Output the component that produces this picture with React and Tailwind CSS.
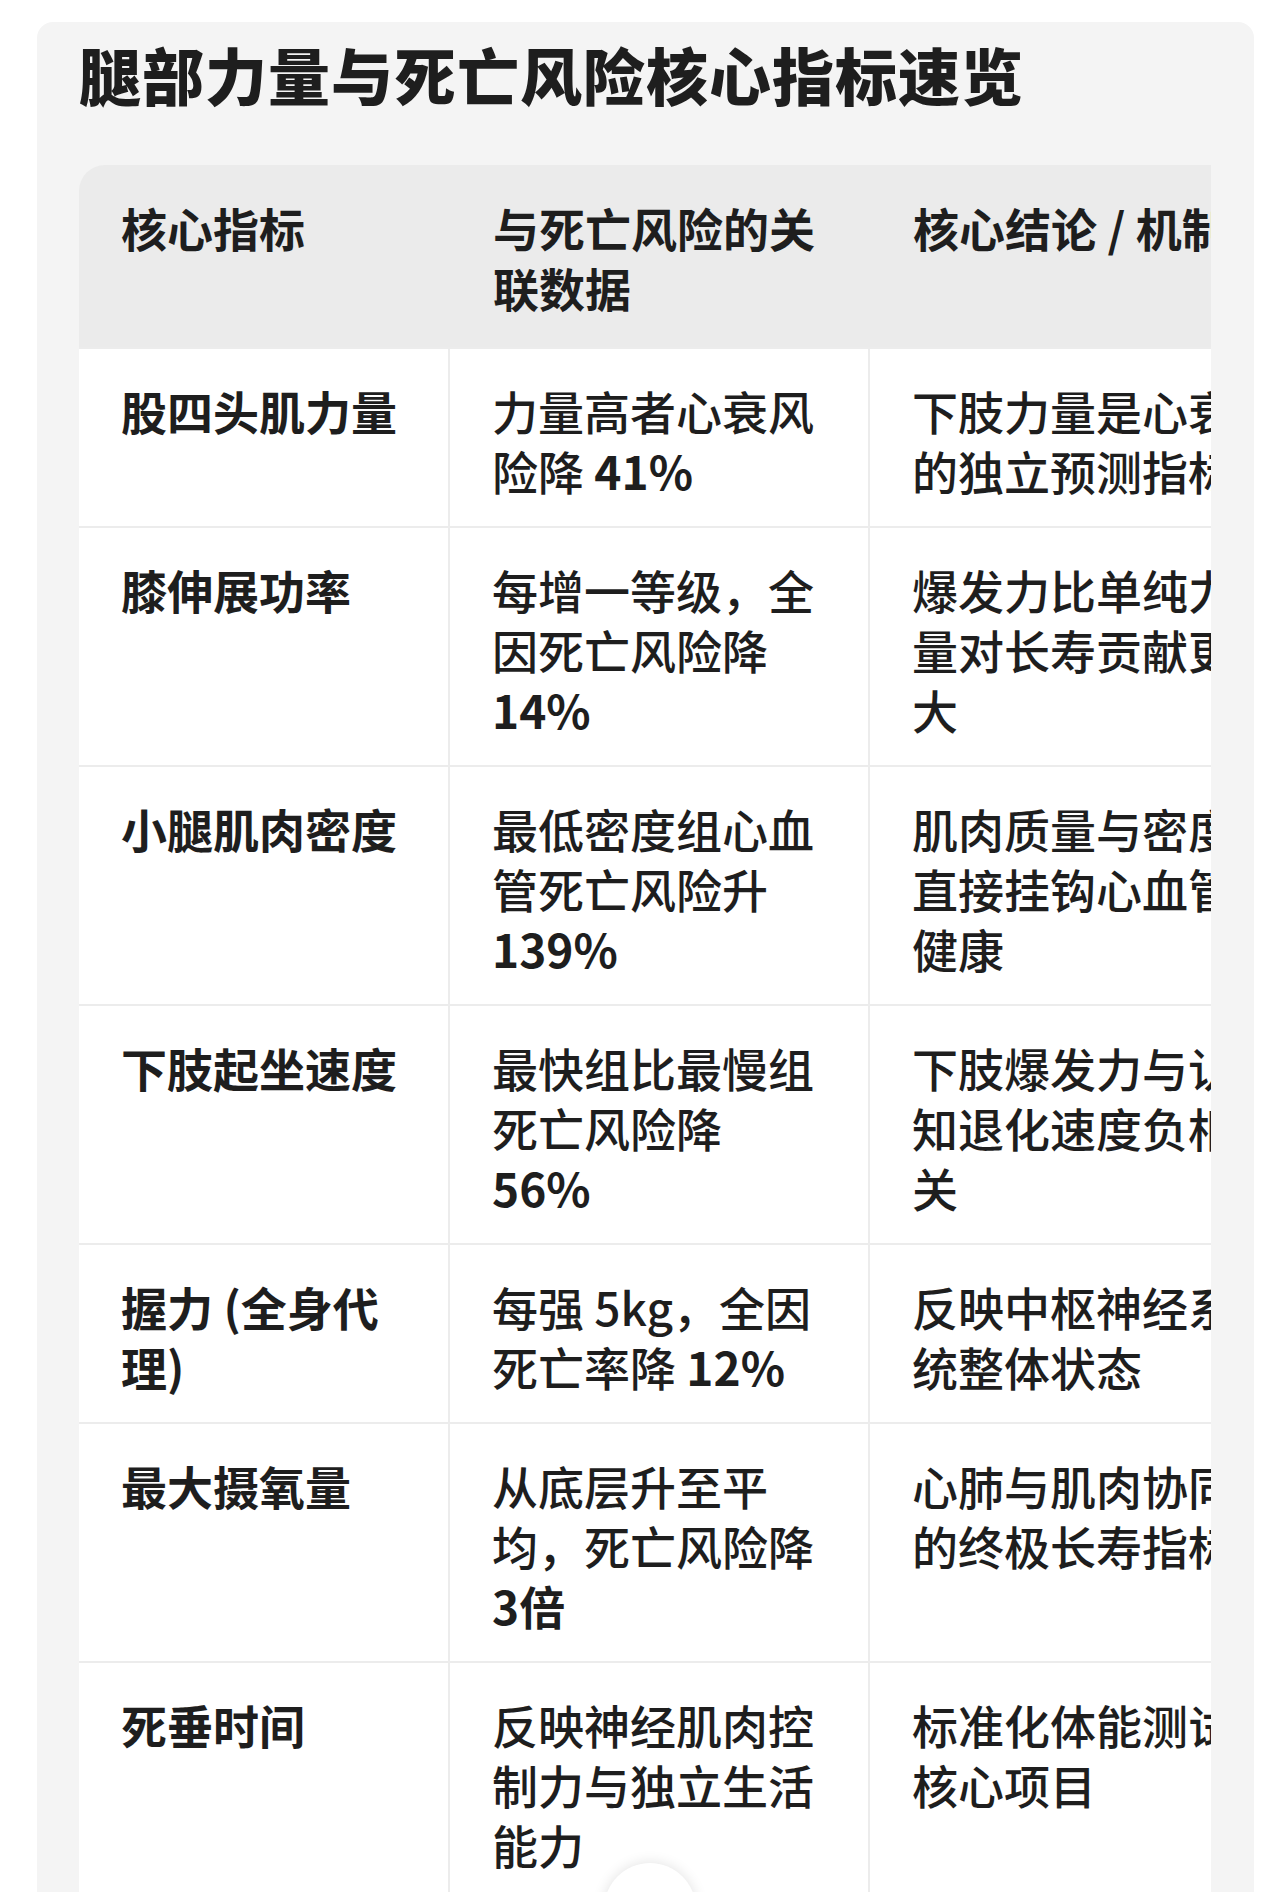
const font = { fontFamily: '"Noto Sans CJK SC", "Noto Sans", sans-serif' };

const rows = [
  { name: '股四头肌力量', data: <>力量高者心衰风险降 <b className="font-bold">41%</b></>, note: '下肢力量是心衰的独立预测指标' },
  { name: '膝伸展功率', data: <>每增一等级，全因死亡风险降 <b className="font-bold">14%</b></>, note: '爆发力比单纯力量对长寿贡献更大' },
  { name: '小腿肌肉密度', data: <>最低密度组心血管死亡风险升 <b className="font-bold">139%</b></>, note: '肌肉质量与密度直接挂钩心血管健康' },
  { name: '下肢起坐速度', data: <>最快组比最慢组死亡风险降 <b className="font-bold">56%</b></>, note: '下肢爆发力与认知退化速度负相关' },
  { name: '握力 (全身代理)', data: <>每强 5kg，全因死亡率降 <b className="font-bold">12%</b></>, note: '反映中枢神经系统整体状态' },
  { name: '最大摄氧量', data: <>从底层升至平均，死亡风险降 <b className="font-bold">3倍</b></>, note: '心肺与肌肉协同的终极长寿指标' },
  { name: '死垂时间', data: '反映神经肌肉控制力与独立生活能力', note: '标准化体能测试核心项目' },
];

export default function App() {
  return (
    <div style={font} className="relative h-[1892px] overflow-hidden bg-white text-[#1e1e1e]">
      <div className="ml-[37px] mr-[26px] mt-[22px] min-h-[1900px] rounded-t-[16px] bg-[#f4f4f4] pl-[42px] pr-[43px] pt-[15px]">
        <h1 className="mb-[54px] text-[62px] font-black leading-[74px] tracking-[1px]">腿部力量与死亡风险核心指标速览</h1>

        <div className="overflow-hidden rounded-tl-[26px]">
          <table className="w-[1210px] table-fixed border-collapse text-[46px] leading-[60px]">
            <colgroup>
              <col className="w-[370px]" />
              <col className="w-[420px]" />
              <col className="w-[420px]" />
            </colgroup>
            <thead>
              <tr className="bg-[#ebebeb] text-left align-top">
                <th className="pl-[42px] pr-[40px] pb-[30px] pt-[32px] font-bold">核心指标</th>
                <th className="pl-[44px] pr-[50px] pb-[30px] pt-[32px] font-bold">与死亡风险的关联数据</th>
                <th className="whitespace-nowrap pl-[44px] pr-[20px] pb-[30px] pt-[32px] font-bold">核心结论 / 机制</th>
              </tr>
            </thead>
            <tbody>
              {rows.map((r) => (
                <tr key={r.name} className="align-top">
                  <td className="border-t-2 border-[#ececec] bg-white pl-[42px] pr-[40px] pb-[26px] pt-[31px] font-bold">{r.name}</td>
                  <td className="border-l-2 border-t-2 border-[#ececec] bg-white pl-[42px] pr-[50px] pb-[26px] pt-[31px] font-medium">{r.data}</td>
                  <td className="border-l-2 border-t-2 border-[#ececec] bg-white pl-[42px] pr-[50px] pb-[26px] pt-[31px] font-medium">{r.note}</td>
                </tr>
              ))}
            </tbody>
          </table>
        </div>
      </div>

      <div className="absolute left-[604px] top-[1863px] h-[92px] w-[92px] rounded-full bg-white shadow-[0_0_14px_rgba(0,0,0,0.12)]" />
    </div>
  );
}
